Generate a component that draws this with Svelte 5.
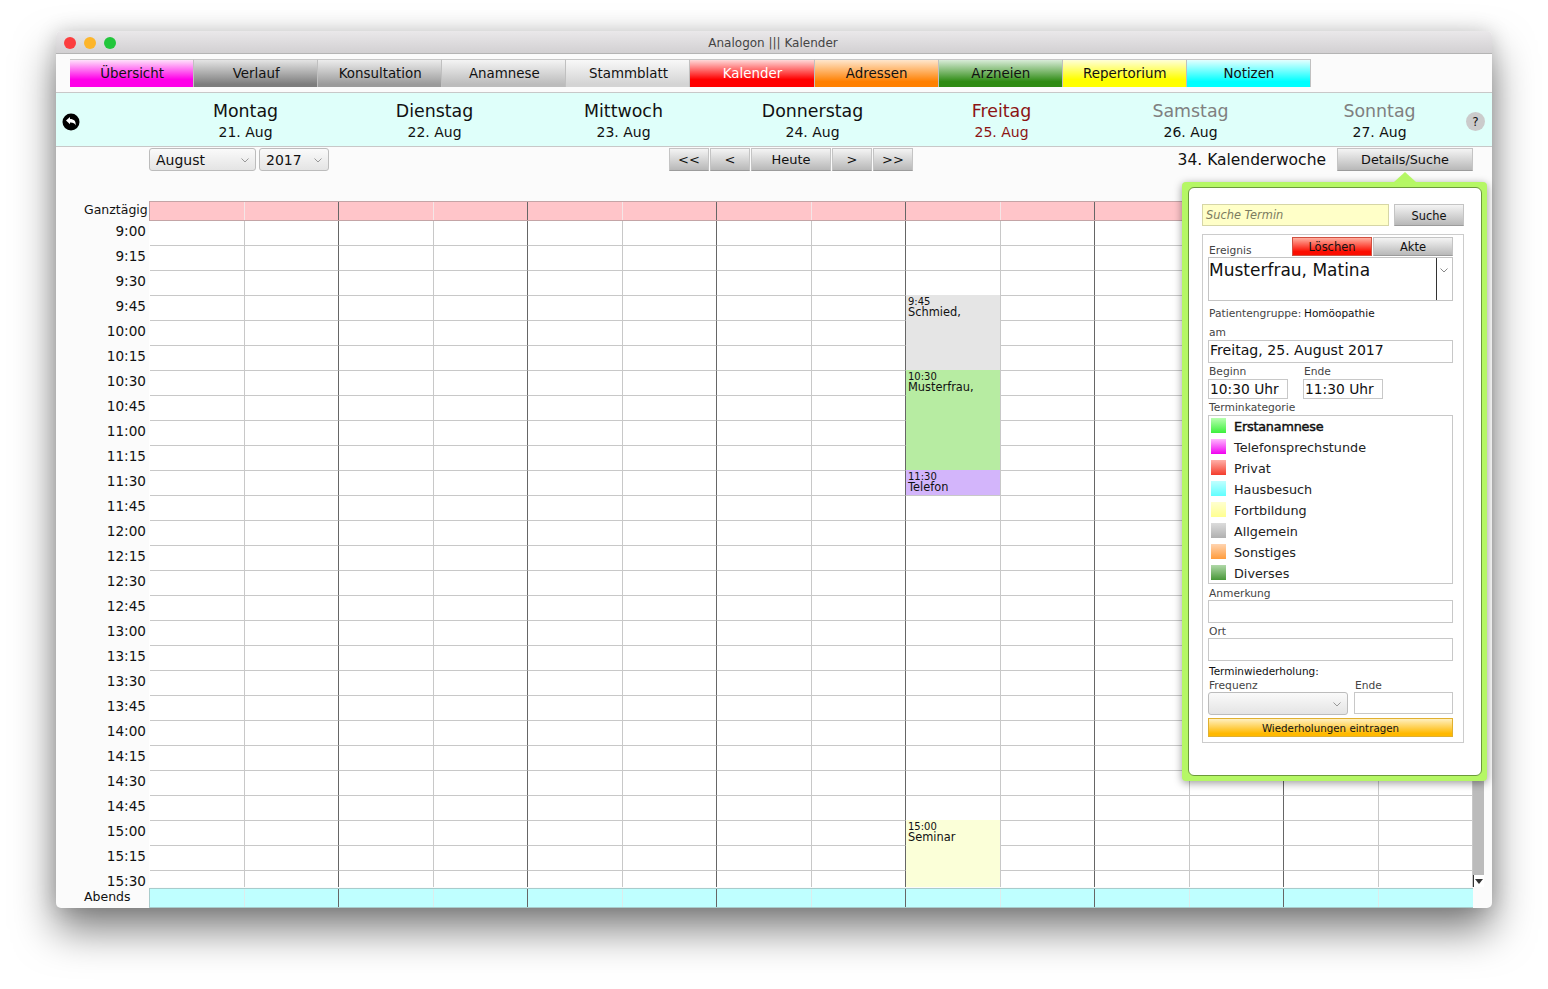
<script>
  const tabs = [
    ['Übersicht', 't-mag'], ['Verlauf', 't-g1'], ['Konsultation', 't-g2'], ['Anamnese', 't-g3'], ['Stammblatt', 't-g4'],
    ['Kalender', 't-red'], ['Adressen', 't-ora'], ['Arzneien', 't-grn'], ['Repertorium', 't-yel'], ['Notizen', 't-cya']
  ];
  const days = [
    ['Montag', '21. Aug', ''], ['Dienstag', '22. Aug', ''], ['Mittwoch', '23. Aug', ''], ['Donnerstag', '24. Aug', ''],
    ['Freitag', '25. Aug', 'fri'], ['Samstag', '26. Aug', 'we'], ['Sonntag', '27. Aug', 'we']
  ];
  const times = [];
  for (let h = 9; h <= 15; h++) for (const m of ['00', '15', '30', '45']) {
    if (h === 15 && m === '45') continue;
    times.push(h + ':' + m);
  }
  const cols = Array.from({ length: 14 }, (_, i) => i);
  const cats = [
    ['Erstanamnese', 's-grn'], ['Telefonsprechstunde', 's-mag'], ['Privat', 's-red'], ['Hausbesuch', 's-cya'],
    ['Fortbildung', 's-yel'], ['Allgemein', 's-gry'], ['Sonstiges', 's-ora'], ['Diverses', 's-dgr']
  ];
</script>

<div class="page">
  <div class="win">
    <div class="title">
      <span class="dot d-r"></span><span class="dot d-y"></span><span class="dot d-g"></span>
      <span class="title-t">Analogon ||| Kalender</span>
    </div>

    <div class="tabs">
      {#each tabs as [t, c]}<div class="tab {c}">{t}</div>{/each}
    </div>

    <div class="days">
      <div class="back">
        <svg width="18" height="18" viewBox="0 0 18 18">
          <circle cx="9" cy="9" r="8.5" fill="#000"/>
          <path d="M4 7.6 L8 4 V6 C12 6 14.2 8.2 13.6 12.4 C12.8 10 11 9.3 8 9.4 V11.3 Z" fill="#fff"/>
        </svg>
      </div>
      {#each days as [n, d, c]}
        <div class="day {c}"><div class="dn">{n}</div><div class="dd">{d}</div></div>
      {/each}
      <div class="help-wrap"><span class="help">?</span></div>
    </div>

    <div class="bar">
      <div class="sel sel-m">August<svg class="chev" width="8" height="5" viewBox="0 0 8 5"><path d="M.5.5 4 4 7.500.5" fill="none" stroke="#999"/></svg></div>
      <div class="sel sel-y">2017<svg class="chev" width="8" height="5" viewBox="0 0 8 5"><path d="M.5.5 4 4 7.500.5" fill="none" stroke="#999"/></svg></div>
      <div class="nav">
        <div class="btn b40">&lt;&lt;</div><div class="btn b40">&lt;</div><div class="btn b80">Heute</div><div class="btn b40">&gt;</div><div class="btn b40">&gt;&gt;</div>
      </div>
      <div class="kw">34. Kalenderwoche</div>
      <div class="btn det">Details/Suche</div>
    </div>

    <div class="band allday">
      <div class="band-l">Ganztägig</div>
      <div class="band-g">{#each cols as c}<div class="bc" class:dark={c % 2 === 1}></div>{/each}</div>
    </div>

    <div class="scroller">
      <div class="labels">{#each times as t}<div class="lab">{t}</div>{/each}</div>
      <div class="clip">
        <div class="grid">
          {#each times as t, r}
            {#each cols as c}<div class="cell" class:dark={c % 2 === 1 && c < 13} style="grid-area: {r + 1} / {c + 1}"></div>{/each}
          {/each}
          <div class="ev e1"><span class="et">9:45</span><span class="en">Schmied,</span></div>
          <div class="ev e2"><span class="et">10:30</span><span class="en">Musterfrau,</span></div>
          <div class="ev e3"><span class="et">11:30</span><span class="en">Telefon</span></div>
          <div class="ev e4"><span class="et">15:00</span><span class="en">Seminar</span></div>
        </div>
      </div>
      <div class="sb">
        <div class="sb-t"></div>
        <div class="sb-a"><svg width="8" height="5" viewBox="0 0 8 5"><path d="M0 0H8L4 5Z" fill="#333"/></svg></div>
      </div>
    </div>

    <div class="band evening">
      <div class="band-l">Abends</div>
      <div class="band-g">{#each cols as c}<div class="bc" class:dark={c % 2 === 1}></div>{/each}</div>
    </div>

    <div class="panel">
      <div class="arrow"></div>
      <div class="inner">
        <div class="search">
          <div class="s-in">Suche Termin</div>
          <div class="btn s-btn">Suche</div>
        </div>
        <div class="box">
          <div class="ev-head">
            <span class="lbl">Ereignis</span>
            <div class="btn red">Löschen</div>
            <div class="btn akte">Akte</div>
          </div>
          <div class="namebox">
            <div class="name">Musterfrau, Matina</div>
            <div class="name-c"><svg width="8" height="5" viewBox="0 0 8 5"><path d="M.5.5 4 4 7.500.5" fill="none" stroke="#888"/></svg></div>
          </div>
          <div class="pg"><span class="lbl">Patientengruppe:</span><span class="pgv">Homöopathie</span></div>
          <div class="lbl am">am</div>
          <div class="inp date">Freitag, 25. August 2017</div>
          <div class="two">
            <div class="tw"><div class="lbl">Beginn</div><div class="inp tm">10:30 Uhr</div></div>
            <div class="tw"><div class="lbl">Ende</div><div class="inp tm">11:30 Uhr</div></div>
          </div>
          <div class="lbl tk">Terminkategorie</div>
          <div class="cats">
            {#each cats as [n, s], i}
              <div class="cat"><span class="sw {s}"></span><span class="cn" class:on={i === 0}>{n}</span></div>
            {/each}
          </div>
          <div class="lbl an">Anmerkung</div>
          <div class="inp blank"></div>
          <div class="lbl an ort">Ort</div>
          <div class="inp blank"></div>
          <div class="rep">Terminwiederholung:</div>
          <div class="freq">
            <div class="fq"><div class="lbl">Frequenz</div><div class="sel fsel"><svg class="chev" width="8" height="5" viewBox="0 0 8 5"><path d="M.5.5 4 4 7.500.5" fill="none" stroke="#999"/></svg></div></div>
            <div class="fe"><div class="lbl">Ende</div><div class="inp fin"></div></div>
          </div>
          <div class="wdh">Wiederholungen eintragen</div>
        </div>
      </div>
    </div>
  </div>
</div>

<style>
  :global(body) { margin: 0; background: #fff; }
  * { box-sizing: border-box; }
  .page { padding: 31px 56px 81px; font-family: "DejaVu Sans", sans-serif; color: #111; }
  .win { position: relative; width: 1436px; height: 877px; background: #fbfbfb; border-radius: 5px;
    box-shadow: 0 22px 42px rgba(0,0,0,.5), 0 0 20px rgba(0,0,0,.15); display: flex; flex-direction: column; }

  .title { height: 23px; flex: none; display: flex; align-items: center; padding: 2px 0 0 8px; gap: 8px; position: relative;
    background: linear-gradient(#eae8ea, #d2d0d2); border-bottom: 1px solid #b4b4b4; border-radius: 5px 5px 0 0; }
  .dot { width: 12px; height: 12px; border-radius: 50%; }
  .d-r { background: #fc3d3f; } .d-y { background: #fdb52a; } .d-g { background: #22c63b; }
  .title-t { position: absolute; left: 0; right: 2px; text-align: center; font-size: 12px; color: #444; }

  .tabs { display: flex; height: 38px; flex: none; padding: 5px 0 0 14px; }
  .tab { width: 124.1px; height: 28px; display: flex; align-items: center; justify-content: center; font-size: 13.4px; padding: 0 0 1px 1px;
    border-top: 1px solid #c6c6c6; border-right: 1px solid #c0c0c0; color: #111; }
  .t-mag { background: linear-gradient(#ffe0fb, #ff00e8 72%); }
  .t-g1 { background: linear-gradient(#e4e4e4, #7d7d7d 90%); }
  .t-g2 { background: linear-gradient(#ececec, #9b9b9b 90%); }
  .t-g3 { background: linear-gradient(#f4f4f4, #bcbcbc 90%); }
  .t-g4 { background: linear-gradient(#f8f8f8, #d4d4d4 90%); }
  .t-red { background: linear-gradient(#ffd8d8, #ff0000 72%); color: #fff; }
  .t-ora { background: linear-gradient(#ffe6cc, #ff8000 80%); }
  .t-grn { background: linear-gradient(#d8ecd8, #2e8b12 80%); }
  .t-yel { background: linear-gradient(#ffffd8, #ffff00 72%); }
  .t-cya { background: linear-gradient(#e4ffff, #00ffff 80%); }

  .days { height: 55px; flex: none; background: #dffffa; border-top: 1px solid #c8c8c8; border-bottom: 1px solid #c8c8c8; padding-top: 2px;
    display: grid; grid-template-columns: 95px repeat(7, 189px) 1fr; align-items: center; }
  .back { padding: 2px 0 0 6px; display: flex; }
  .day { text-align: center; }
  .dn { font-size: 17.4px; line-height: 24px; }
  .dd { font-size: 14px; line-height: 19px; }
  .fri { color: #8c1414; }
  .we .dn { color: #808080; }
  .help-wrap { display: flex; margin-left: -8px; padding-top: 2px; }
  .help { width: 19px; height: 19px; border-radius: 50%; background: #cbcbcb; font-size: 12px; display: flex; align-items: center; justify-content: center; }

  .bar { height: 54px; flex: none; display: flex; align-items: flex-start; padding: 1px 19px 0 93px; }
  .sel { height: 23px; border: 1px solid #bcbcbc; border-radius: 3px; background: linear-gradient(#fafafa, #e4e4e4);
    font-size: 14px; line-height: 22px; padding-left: 6px; position: relative; }
  .chev { position: absolute; right: 6px; top: 9px; }
  .sel-m { width: 107px; }
  .sel-y { width: 70px; margin-left: 3px; }
  .nav { display: flex; gap: 1px; margin-left: 340px; }
  .btn { height: 23px; display: flex; align-items: center; justify-content: center; font-size: 13px;
    background: linear-gradient(#f4f4f4, #b8b8b8); border: 1px solid #c4c4c4; border-bottom-color: #9c9c9c; }
  .b40 { width: 40px; }
  .b80 { width: 80px; }
  .kw { margin-left: auto; font-size: 15.5px; line-height: 24px; margin-right: 11px; }
  .det { width: 136px; font-size: 12.8px; }

  .band { height: 20px; flex: none; display: flex; }
  .band-l { width: 93px; padding-left: 28px; font-size: 12.5px; line-height: 17px; white-space: nowrap; }
  .band-g { width: 1324px; display: grid; grid-template-columns: repeat(14, 1fr); border: 1px solid; border-right: 0; }
  .allday .band-g { background: #ffc5c9; border-color: #c4a4a6; }
  .evening { margin-top: 1px; }
  .evening .band-g { background: #bfffff; border-color: #a8cccc; }
  .evening .bc { border-right-color: #dcecec; }
  .evening .bc.dark { border-right-color: #666; }
  .bc { border-right: 1px solid #f4e6e7; }
  .bc.dark { border-right-color: #666; }
  .bc:last-child { border-right: 0; }

  .scroller { height: 666px; flex: none; display: flex; }
  .labels { width: 93px; flex: none; height: 666px; }
  .lab { height: 25px; text-align: right; padding: 4px 3px 0 0; font-size: 13.6px; line-height: 12px; }
  .clip { width: 1324px; height: 666px; flex: none; overflow: hidden; background: #fff; padding-left: 1px; }
  .grid { display: grid; grid-template-columns: repeat(14, 1fr); grid-template-rows: repeat(27, 25px); height: 675px; }
  .cell { border-right: 1px solid #c8c8c8; border-bottom: 1px solid #c8c8c8; }
  .cell.dark { border-right-color: #666; }
  .ev { grid-column: 9; display: flex; flex-direction: column; padding: 2px 0 0 2px; margin: -1px 1px 1px 0; z-index: 1; overflow: hidden; }
  .et { font-size: 10px; line-height: 9px; }
  .en { font-size: 11.4px; line-height: 13px; }
  .e1 { grid-row: 4 / span 3; background: #e5e5e5; }
  .e2 { grid-row: 7 / span 4; background: #b7eca2; }
  .e3 { grid-row: 11 / span 1; background: #d3b5fb; }
  .e4 { grid-row: 25 / span 3; background: #fbffd8; }

  .sb { width: 11px; flex: none; }
  .sb-t { height: 654px; background: #bbb; }
  .sb-a { height: 12px; background: #fff; border-left: 1px solid #333; display: flex; align-items: center; justify-content: center; }

  .panel { position: absolute; left: 1126px; top: 151px; width: 305px; height: 599px; background: #b5f765; border-radius: 4px;
    padding: 5px 5px 5px 6px; box-shadow: 0 2px 8px rgba(0,0,0,.4); z-index: 5; }
  .arrow { position: absolute; left: 212px; top: -10px; width: 0; height: 0; border: 11px solid transparent; border-top: 0; border-bottom: 10px solid #b5f765; }
  .inner { height: 100%; background: #fff; border: 1px solid #6c9a3a; border-radius: 6px; padding: 16px 16px 0 13px; }
  .search { display: flex; gap: 5px; height: 22px; }
  .s-in { width: 187px; background: #ffffc8; border: 1px solid #d6d6a6; font-size: 11.4px; font-style: italic; color: #7c7c60; line-height: 21px; padding-left: 3px; }
  .s-btn { width: 70px; height: 22px; font-size: 11.4px; padding-top: 1px; }
  .box { margin-top: 8px; height: 509px; width: 262px; border: 1px solid #ccc; padding: 2px 10px 0 5px; }
  .lbl { font-size: 10.7px; color: #444; line-height: 13px; }
  .ev-head { height: 20px; display: flex; align-items: flex-start; }
  .ev-head .lbl { width: 84px; padding: 7px 0 0 1px; }
  .red { width: 80px; height: 19px; font-size: 11.5px; margin-right: 1px; background: linear-gradient(#ffb0a0, #fb0d00 80%); border-color: #d05040; }
  .akte { width: 80px; height: 19px; font-size: 11.5px; padding-top: 1px; }
  .namebox { height: 44px; border: 1px solid #c4c4c4; display: flex; background: #fff; }
  .name { width: 228px; border-right: 1px solid #333; font-size: 17px; line-height: 25px; white-space: nowrap; }
  .name-c { flex: 1; padding: 10px 0 0 3px; line-height: 0; }
  .pg { display: flex; height: 24px; padding: 6px 0 0 1px; }
  .pg .lbl { width: 95px; }
  .pgv { font-size: 10.5px; line-height: 13px; color: #111; }
  .am { padding-left: 1px; height: 14px; margin-top: 1px; }
  .inp { border: 1px solid #c8c8c8; background: #fff; }
  .date { height: 23px; font-size: 14.1px; line-height: 19px; padding-left: 1px; }
  .two { display: flex; gap: 15px; margin-top: 2px; }
  .tw .lbl { padding-left: 1px; height: 14px; }
  .tm { width: 80px; height: 20px; font-size: 13.8px; line-height: 18px; padding-left: 1px; white-space: nowrap; }
  .tk { height: 14px; margin-top: 2px; padding-left: 1px; }
  .cats { height: 169px; border: 1px solid #c8c8c8; }
  .cat { height: 21px; display: flex; align-items: center; padding-bottom: 2px; }
  .sw { width: 15px; height: 15px; margin: 0 8px 0 2px; flex: none; }
  .cn { font-size: 12.8px; color: #222; white-space: nowrap; padding-top: 1px; }
  .cn.on { color: #111; -webkit-text-stroke: .45px #111; letter-spacing: -.2px; }
  .s-grn { background: linear-gradient(#b8ffb0, #3cf03c); }
  .s-mag { background: linear-gradient(#ffb8ff, #f000f0); }
  .s-red { background: linear-gradient(#ffb0a8, #f43c2c); }
  .s-cya { background: linear-gradient(#c0ffff, #60ffff); }
  .s-yel { background: linear-gradient(#ffffd0, #ffff90); }
  .s-gry { background: linear-gradient(#dcdcdc, #b0b0b0); }
  .s-ora { background: linear-gradient(#ffd4b0, #ff9c3c); }
  .s-dgr { background: linear-gradient(#b0d8a8, #489838); }
  .blank { height: 23px; }
  .lbl.an { margin-top: 2px; height: 14px; line-height: 15px; padding-left: 1px; }
  .lbl.ort { margin-top: 1px; }
  .rep { font-size: 10.5px; color: #111; line-height: 13px; margin-top: 4px; padding-left: 1px; }
  .freq { display: flex; gap: 6px; }
  .fq .lbl, .fe .lbl { padding-left: 1px; height: 14px; line-height: 15px; }
  .fsel { width: 140px; height: 23px; }
  .fin { width: 99px; height: 22px; }
  .wdh { margin-top: 3px; height: 19px; font-size: 10.3px; text-align: center; line-height: 18px; background: linear-gradient(#fff0c0, #ffb900 85%); border: 1px solid #e0b030; }
</style>
